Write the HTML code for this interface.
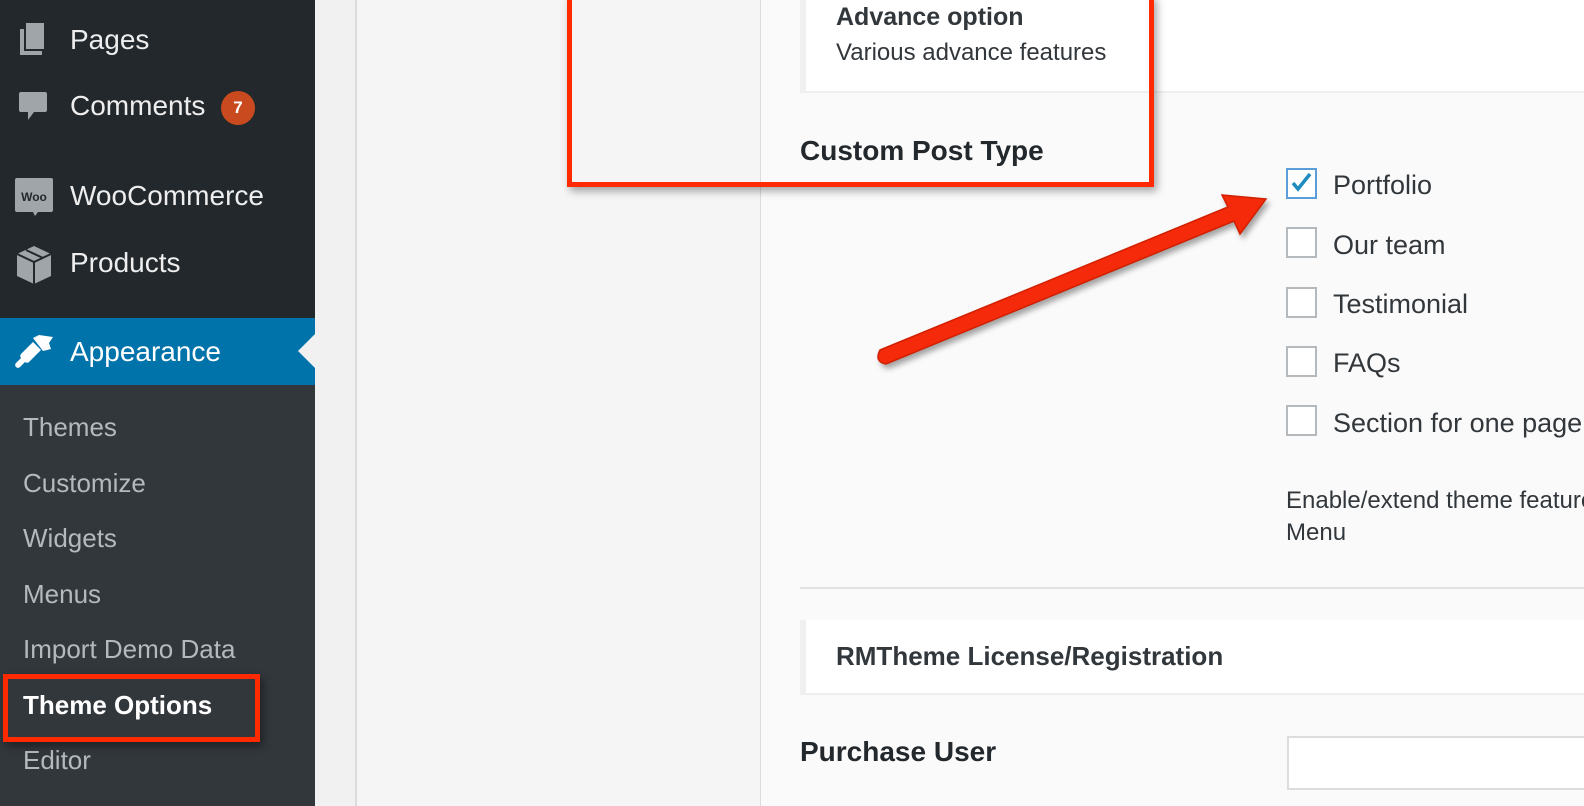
<!DOCTYPE html>
<html><head><meta charset="utf-8"><style>
*{margin:0;padding:0;box-sizing:border-box}
body{width:1584px;height:806px;overflow:hidden;position:relative;background:#fafafa;font-family:"Liberation Sans",sans-serif}
.a{position:absolute;white-space:nowrap}
.side{left:0;top:0;width:315px;height:806px;background:#23282d}
.sub{left:0;top:385px;width:315px;height:421px;background:#32373c}
.mi{position:absolute;left:70px;color:#eee;font-size:28px;line-height:30px;white-space:nowrap}
.si{position:absolute;left:23px;color:#b4b9be;font-size:26px;line-height:28px;white-space:nowrap}
.cb{position:absolute;left:1286px;width:31px;height:31px;border:2px solid #b4b9be;background:#fff}
.cl{position:absolute;left:1333px;font-size:27px;color:#32373c;line-height:30px;white-space:nowrap}
</style></head><body>
<div class="a side"></div>
<div class="a sub"></div>
<svg class="a" style="left:18px;top:21px" width="30" height="36" viewBox="0 0 30 36"><path d="M8 2h18v26H8z" fill="#a0a5aa"/><path d="M2 8h4v22h18v4H2z" fill="#a0a5aa"/></svg>
<div class="mi" style="top:25px">Pages</div>
<svg class="a" style="left:18px;top:90px" width="30" height="34" viewBox="0 0 30 34"><path d="M3 2h24a2 2 0 0 1 2 2v16a2 2 0 0 1-2 2H16l-6 8v-8H3a2 2 0 0 1-2-2V4a2 2 0 0 1 2-2z" fill="#a0a5aa"/></svg>
<div class="mi" style="top:91px">Comments</div>
<div class="a" style="left:221px;top:91px;width:34px;height:34px;border-radius:17px;background:#ca4a1f;color:#fff;font-size:17px;font-weight:bold;text-align:center;line-height:34px">7</div>
<svg class="a" style="left:14px;top:177px" width="40" height="40" viewBox="0 0 40 40"><path d="M3 1h34a2 2 0 0 1 2 2v30a2 2 0 0 1-2 2H24l-3 4-2-4H3a2 2 0 0 1-2-2V3a2 2 0 0 1 2-2z" fill="#a0a5aa"/><text x="20" y="24" font-size="12" font-weight="bold" text-anchor="middle" fill="#23282d" font-family="Liberation Sans">Woo</text></svg>
<div class="mi" style="top:181px">WooCommerce</div>
<svg class="a" style="left:16px;top:245px" width="36" height="40" viewBox="0 0 36 40"><path d="M18 1L35 9v22L18 39 1 31V9z" fill="#a0a5aa"/><path d="M1 9l17 8 17-8M18 17v22M10 5l17 8" stroke="#23282d" stroke-width="2" fill="none"/></svg>
<div class="mi" style="top:248px">Products</div>
<div class="a" style="left:0;top:318px;width:315px;height:67px;background:#0073aa"></div>
<div class="a" style="left:298px;top:334px;width:0;height:0;border-top:17px solid transparent;border-bottom:17px solid transparent;border-right:17px solid #f1f1f1"></div>
<svg class="a" style="left:15px;top:334px" width="40" height="36" viewBox="0 0 40 36"><path d="M18 4l6-3 14 2-4 6 2 6-8 2z" fill="#fff"/><path d="M18 8l8 8-12 12a3 3 0 0 1-4 0l-5 5a2.5 2.5 0 0 1-4-4l5-5a3 3 0 0 1 0-4z" fill="#fff"/></svg>
<div class="mi" style="top:337px;color:#fff">Appearance</div>
<div class="si" style="top:413px">Themes</div>
<div class="si" style="top:469px">Customize</div>
<div class="si" style="top:524px">Widgets</div>
<div class="si" style="top:580px">Menus</div>
<div class="si" style="top:635px">Import Demo Data</div>
<div class="si" style="top:691px;color:#fff;font-weight:bold">Theme Options</div>
<div class="si" style="top:746px">Editor</div>
<div class="a" style="left:315px;top:0;width:40px;height:806px;background:#f1f1f1"></div>
<div class="a" style="left:355px;top:0;width:406px;height:806px;background:#f5f5f5;border-left:2px solid #dcdcdc;border-right:1px solid #dcdcdc"></div>
<div class="a" style="left:800px;top:0;width:784px;height:93px;background:#fff;border-left:6px solid #f0f0f0;border-bottom:2px solid #eee"></div>
<div class="a" style="left:836px;top:3px;font-size:25px;font-weight:bold;color:#32373c">Advance option</div>
<div class="a" style="left:836px;top:39px;font-size:24px;color:#32373c">Various advance features</div>
<div class="a" style="left:800px;top:135px;font-size:28px;font-weight:bold;color:#23282d">Custom Post Type</div>
<div class="cb" style="top:168px;border-color:#5b9dd9"><svg width="27" height="27" viewBox="0 0 27 27"><path d="M5 13l5 6L22 4" stroke="#1e8cbe" stroke-width="3.5" fill="none"/></svg></div>
<div class="cl" style="top:170px">Portfolio</div>
<div class="cb" style="top:227px"></div><div class="cl" style="top:230px">Our team</div>
<div class="cb" style="top:287px"></div><div class="cl" style="top:289px">Testimonial</div>
<div class="cb" style="top:346px"></div><div class="cl" style="top:348px">FAQs</div>
<div class="cb" style="top:405px"></div><div class="cl" style="top:408px">Section for one page</div>
<div class="a" style="left:1286px;top:485px;font-size:24px;color:#32373c;line-height:32px">Enable/extend theme features<br>Menu</div>
<div class="a" style="left:800px;top:587px;width:784px;height:2px;background:#e2e2e2"></div>
<div class="a" style="left:800px;top:620px;width:784px;height:75px;background:#fff;border-left:6px solid #f0f0f0;border-bottom:2px solid #eee"></div>
<div class="a" style="left:836px;top:641px;font-size:26px;font-weight:bold;color:#32373c">RMTheme License/Registration</div>
<div class="a" style="left:800px;top:736px;font-size:28px;font-weight:bold;color:#23282d">Purchase User</div>
<div class="a" style="left:1287px;top:736px;width:310px;height:54px;background:#fff;border:2px solid #ddd"></div>
<div class="a" style="left:567px;top:-5px;width:587px;height:192px;border:5px solid #ff2a00;box-shadow:3px 4px 8px rgba(0,0,0,.35)"></div>
<div class="a" style="left:3px;top:674px;width:257px;height:68px;border:5px solid #ff2a00;box-shadow:3px 4px 8px rgba(0,0,0,.4)"></div>
<svg class="a" style="left:0;top:0;filter:drop-shadow(3px 4px 3px rgba(0,0,0,.35))" width="1584" height="806"><path d="M880 350L1228 207L1222 195L1266 199L1240 234L1234 221L886 364Q874 362 880 350Z" fill="#f52a0a" stroke="#d02000" stroke-width="1.5"/></svg>
</body></html>
